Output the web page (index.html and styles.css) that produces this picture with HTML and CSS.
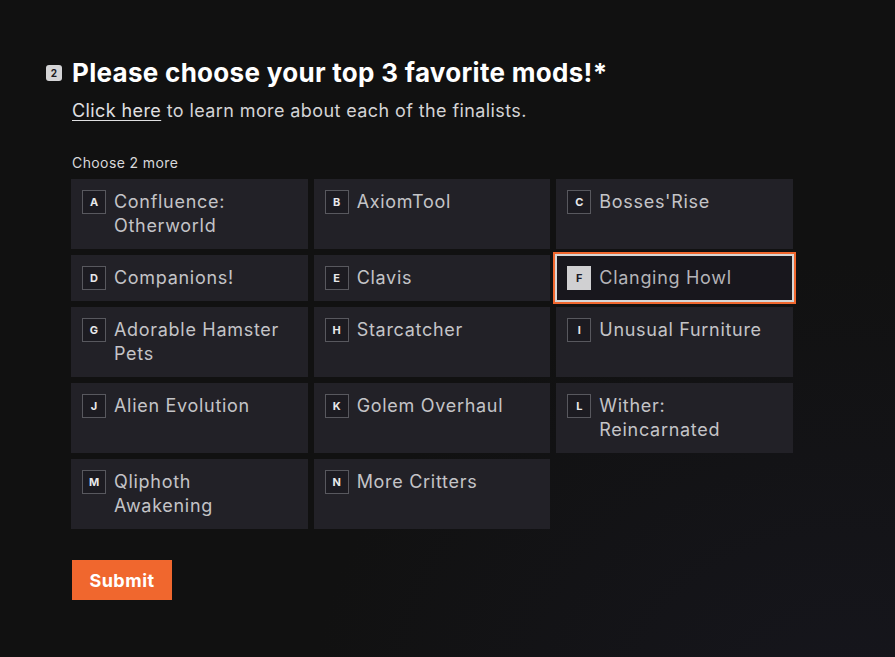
FILE: index.html
```html
<!DOCTYPE html>
<html>
  <head>
    <meta charset="utf-8" />
    <meta name="viewport" content="width=device-width, initial-scale=1" />
    <link rel="stylesheet" href="styles.css">
  </head>
  <body>
    <div class="page">
      <div class="question">
        <div class="question-header">
          <span class="question-num">2</span>
          <h1 class="question-title">Please choose your top 3 favorite mods!*</h1>
        </div>
        <div class="question-body">
          <p class="question-desc"><a href="#">Click here</a> to learn more about each of the finalists.</p>
          <div class="hint">Choose 2 more</div>
          <div class="choices">
            <div class="choice"><span class="key">A</span><span class="label">Confluence: Otherworld</span></div>
            <div class="choice"><span class="key">B</span><span class="label">AxiomTool</span></div>
            <div class="choice"><span class="key">C</span><span class="label">Bosses'Rise</span></div>
            <div class="choice"><span class="key">D</span><span class="label">Companions!</span></div>
            <div class="choice"><span class="key">E</span><span class="label">Clavis</span></div>
            <div class="choice selected"><span class="key">F</span><span class="label">Clanging Howl</span></div>
            <div class="choice"><span class="key">G</span><span class="label">Adorable Hamster Pets</span></div>
            <div class="choice"><span class="key">H</span><span class="label">Starcatcher</span></div>
            <div class="choice"><span class="key">I</span><span class="label">Unusual Furniture</span></div>
            <div class="choice"><span class="key">J</span><span class="label">Alien Evolution</span></div>
            <div class="choice"><span class="key">K</span><span class="label">Golem Overhaul</span></div>
            <div class="choice"><span class="key">L</span><span class="label">Wither: Reincarnated</span></div>
            <div class="choice"><span class="key">M</span><span class="label">Qliphoth Awakening</span></div>
            <div class="choice"><span class="key">N</span><span class="label">More Critters</span></div>
          </div>
          <button class="submit">Submit</button>
        </div>
      </div>
    </div>
  </body>
</html>
```

FILE: styles.css
```css
html,
body {
  margin: 0;
  padding: 0;
  box-sizing: border-box;
}

body {
  background: #111111;
  background-image: radial-gradient(ellipse at 95% 110%, #16161d 0%, #111111 45%);
  min-height: 100vh;
  font-family: "Inter", "Open Sans", sans-serif;
  color: #d6d6d8;
}

.page {
  padding: 58px 0 0 46px;
}

.question-header {
  display: flex;
  align-items: center;
  gap: 10px;
}

.question-num {
  display: flex;
  align-items: center;
  justify-content: center;
  width: 16px;
  height: 16px;
  border-radius: 3px;
  background: #d4d4d6;
  color: #1b1b1f;
  font-size: 10px;
  font-weight: 700;
}

.question-title {
  margin: 0;
  font-size: 26px;
  line-height: 30px;
  font-weight: 700;
  color: #ffffff;
  letter-spacing: 0.3px;
}

.question-body {
  padding-left: 25px;
}

.question-desc {
  margin: 11px 0 0 1px;
  font-size: 18px;
  line-height: 24px;
  color: #d4d4d6;
  letter-spacing: 0.4px;
}

.question-desc a {
  color: #e0e0e2;
  text-decoration: underline;
  text-underline-offset: 3px;
}

.hint {
  margin: 32px 0 0 1px;
  font-size: 14px;
  line-height: 16px;
  color: #d8d8da;
  letter-spacing: 0.4px;
}

.choices {
  display: grid;
  grid-template-columns: repeat(3, 1fr);
  gap: 6px;
  width: 722px;
  margin-top: 8px;
}

.choice {
  display: flex;
  align-items: flex-start;
  gap: 8px;
  padding: 11px;
  background: #222127;
}

.choice .key {
  flex: none;
  display: flex;
  align-items: center;
  justify-content: center;
  width: 22px;
  height: 22px;
  border: 1px solid #58585e;
  background: #1c1b21;
  color: #e8e8ea;
  font-size: 11px;
  font-weight: 700;
}

.choice .label {
  flex: 1;
  padding-right: 6px;
  font-size: 18px;
  line-height: 24px;
  color: #c4c4c7;
  letter-spacing: 0.7px;
}

.choice.selected {
  background: #18171d;
  box-shadow: inset 0 0 0 1px #d6d6d6, 0 0 0 1px #d6d6d6, 0 0 0 3px #f0672e;
}

.choice.selected .key {
  background: #d0d0d2;
  border-color: #d0d0d2;
  color: #1a1a26;
}

.choice.selected .label {
  color: #b4b4b8;
}

.submit {
  margin-top: 31px;
  margin-left: 1px;
  width: 100px;
  height: 40px;
  border: 0;
  background: #f0672e;
  color: #ffffff;
  font-family: inherit;
  font-size: 18px;
  font-weight: 700;
  letter-spacing: 0.5px;
  cursor: pointer;
}
```
